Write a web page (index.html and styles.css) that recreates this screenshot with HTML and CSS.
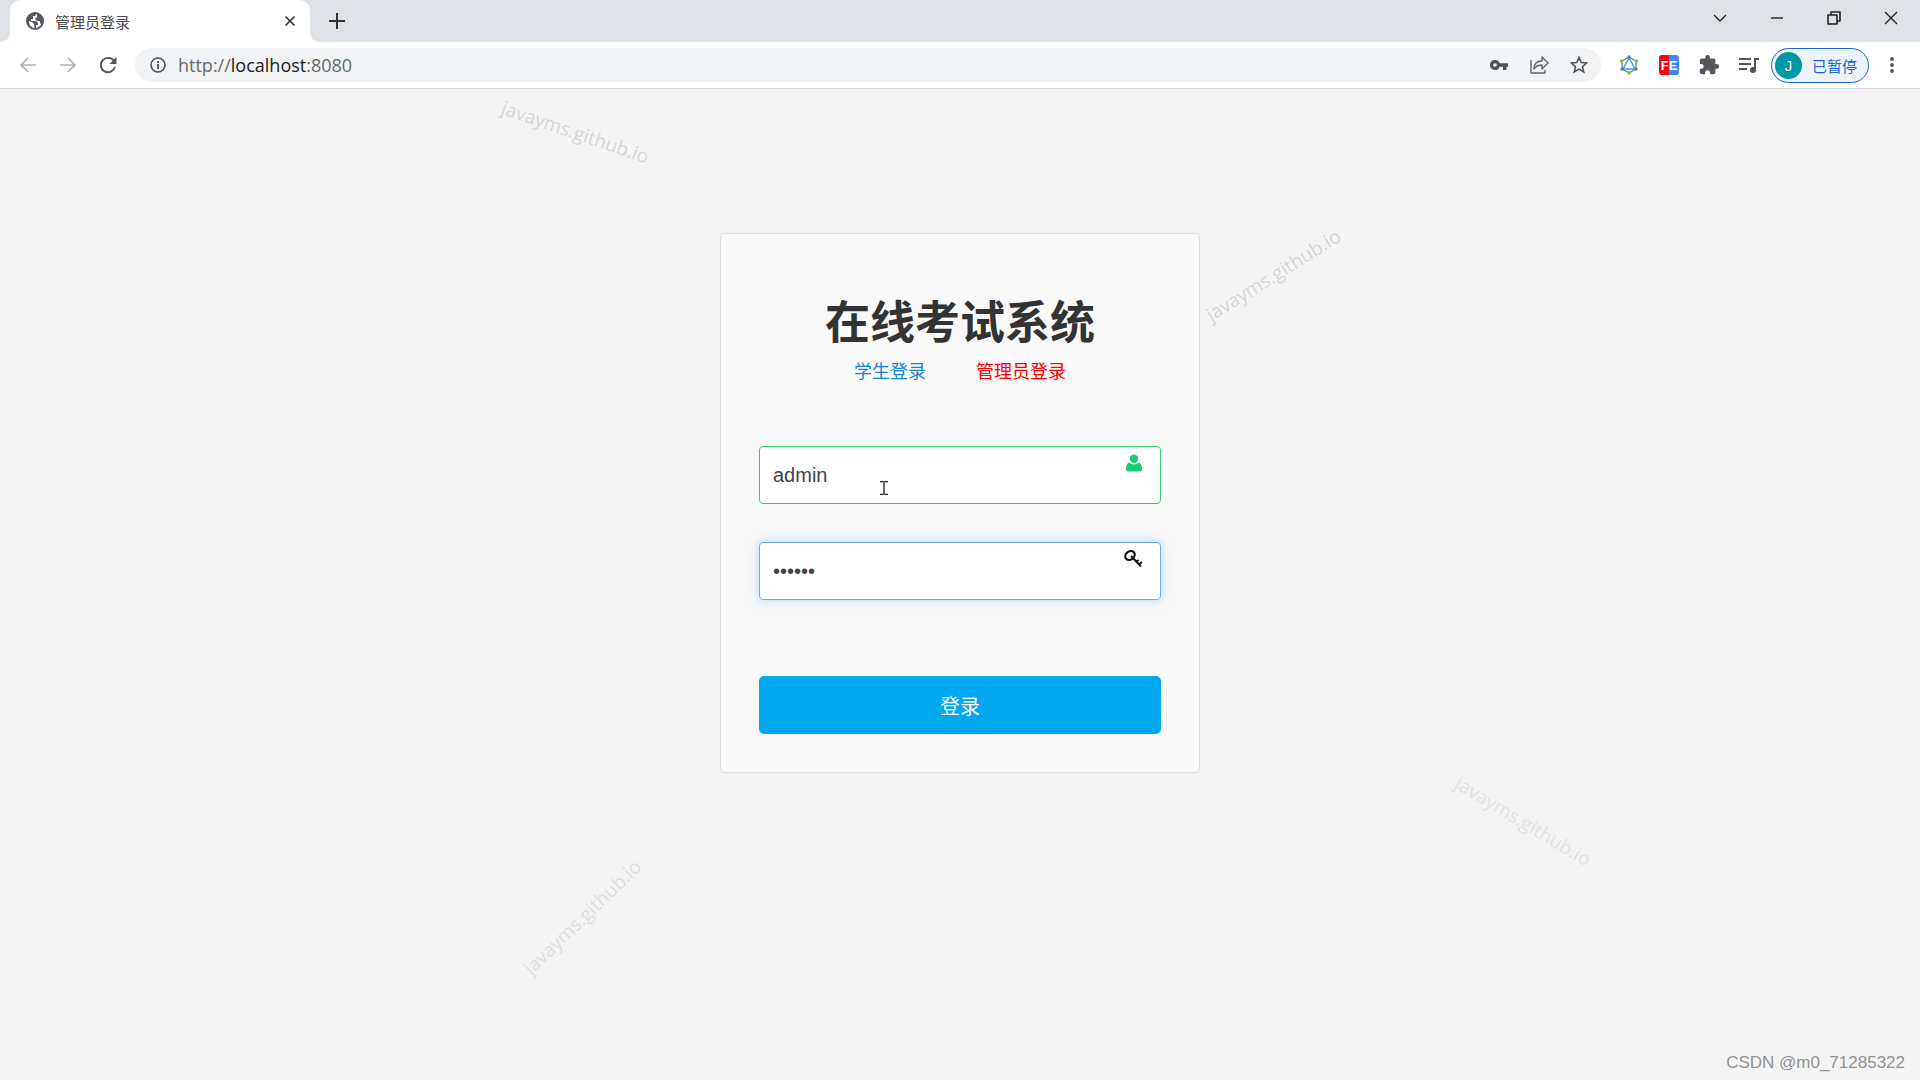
FILE: index.html
```html
<!DOCTYPE html>
<html lang="zh-CN">
<head>
	<meta charset="utf-8">
	<title>管理员登录</title>
	<link rel="stylesheet" href="styles.css">
</head>
<body>
	<header class="browser">
		<div class="tabbar">
			<div class="tab">
				<svg class="favicon" viewBox="0 0 18 18" width="18" height="18"><circle cx="9" cy="9" r="8" fill="#fff" stroke="#55585c" stroke-width="2"/><path d="M1 10V8C1 4 4 1 9 1h2L9 4H7v3H5v2h5l2 2v2h-2v4C5 17 1 14 1 10z" fill="#55585c"/><path d="M3 9l3 1 2 2v2l1 2c-4 0-6-3-6-7z" fill="#fff"/><path d="M10 1c4 1 7 4 7 8l-1 4-2-2V9h-3L9 7l2-2V3z" fill="#55585c"/></svg>
				<span class="tab-title">管理员登录</span>
				<button class="icon-btn tab-close" aria-label="关闭标签页"><svg viewBox="0 0 12 12" width="12" height="12"><path d="M1.500 1.500l9 9m0-9l-9 9" stroke="#303336" stroke-width="1.600"/></svg></button>
			</div>
			<button class="icon-btn new-tab" aria-label="新标签页"><svg viewBox="0 0 16 16" width="16" height="16"><path d="M8 0v16M0 8h16" stroke="#303336" stroke-width="2"/></svg></button>
			<div class="window-controls">
				<button class="icon-btn" aria-label="搜索标签页"><svg viewBox="0 0 14 14" width="14" height="14"><path d="M1 4l6 6 6-6" fill="none" stroke="#222" stroke-width="1.4"/></svg></button>
				<button class="icon-btn" aria-label="最小化"><svg viewBox="0 0 14 14" width="14" height="14"><path d="M1 7h12" stroke="#222" stroke-width="1.4"/></svg></button>
				<button class="icon-btn" aria-label="还原"><svg viewBox="0 0 14 14" width="14" height="14"><path d="M1 4h9v9H1zM4 4V1h9v9h-3" fill="none" stroke="#222" stroke-width="1.6" stroke-linejoin="round"/></svg></button>
				<button class="icon-btn" aria-label="关闭"><svg viewBox="0 0 14 14" width="14" height="14"><path d="M1 1l12 12M13 1L1 13" stroke="#222" stroke-width="1.4"/></svg></button>
			</div>
		</div>

		<div class="toolbar">
			<div class="nav">
				<button class="icon-btn" aria-label="后退"><svg viewBox="0 0 18 18" width="18" height="18"><path d="M17 9H2M9 2L2 9l7 7" fill="none" stroke="#adb0b3" stroke-width="1.7"/></svg></button>
				<button class="icon-btn" aria-label="前进"><svg viewBox="0 0 18 18" width="18" height="18"><path d="M1 9h15M9 2l7 7-7 7" fill="none" stroke="#adb0b3" stroke-width="1.7"/></svg></button>
				<button class="icon-btn" aria-label="重新加载"><svg viewBox="0 0 18 18" width="18" height="18"><path d="M15 5A7.200 7.200 0 1 0 16 11" fill="none" stroke="#505357" stroke-width="1.900"/><path d="M17.500 1v7h-7z" fill="#505357"/></svg></button>
			</div>
			<div class="omnibox">
				<button class="icon-btn site-info" aria-label="网站信息"><svg viewBox="0 0 16 16" width="16" height="16"><circle cx="8" cy="8" r="7" fill="none" stroke="#505357" stroke-width="1.6"/><path d="M8 7v5M8 4v2" stroke="#505357" stroke-width="1.8"/></svg></button>
				<div class="url" role="textbox" aria-label="地址栏" contenteditable="true" spellcheck="false">http://<span class="host">localhost</span>:8080</div>
				<button class="icon-btn" aria-label="密码"><svg viewBox="0 0 18 18" width="18" height="18"><path fill-rule="evenodd" d="M5 4a5 5 0 0 1 4.7 3.3H18v3.4h-1.5V14H13v-3.3H9.7A5 5 0 1 1 5 4zm0 3.2a1.8 1.8 0 1 0 0 3.6 1.8 1.8 0 0 0 0-3.600z" fill="#505357"/></svg></button>
				<button class="icon-btn" aria-label="分享"><svg viewBox="0 0 20 20" width="20" height="20"><path d="M2 5v13h14v-3M5 14c0-5 3-8 8-8V2l6 6-6 6v-4c-4 0-6 1-8 4z" fill="none" stroke="#63666a" stroke-width="1.4" stroke-linejoin="round"/></svg></button>
				<button class="icon-btn" aria-label="收藏"><svg viewBox="0 0 18 18" width="18" height="18"><path d="M9 1.500l2.200 5 5.400.5-4.100 3.600 1.200 5.300L9 13.100l-4.700 2.800 1.200-5.300L1.400 7l5.400-.5z" fill="none" stroke="#505357" stroke-width="1.6"/></svg></button>
			</div>
			<div class="extensions">
				<button class="icon-btn" aria-label="扩展程序"><svg viewBox="0 0 20 20" width="20" height="20"><path d="M10 2l7 4v8l-7 4-7-4V6z" fill="none" stroke="#687078" stroke-width="1.2"/><path d="M10 3l6 11H4z" fill="#fff" stroke="#3d9be0" stroke-width="1.5"/><g fill="#79c832"><circle cx="2.5" cy="6" r="1.7"/><circle cx="17.5" cy="6" r="1.7"/><circle cx="10" cy="18" r="1.8"/></g><g fill="#2c88d0"><circle cx="10" cy="2" r="1.7"/><circle cx="3" cy="14" r="1.7"/><circle cx="17" cy="14" r="1.7"/></g></svg></button>
				<button class="icon-btn" aria-label="FE 助手"><span class="fe"><b>F</b><b>E</b></span></button>
				<button class="icon-btn" aria-label="管理扩展"><svg viewBox="0 0 24 24" width="22" height="22"><path d="M20.5 11H19V7c0-1.100-.9-2-2-2h-4V3.500a2.500 2.500 0 0 0-5 0V5H4c-1.100 0-2 .9-2 2v3.800h1.500a2.700 2.700 0 0 1 0 5.400H2V20c0 1.100.9 2 2 2h3.800v-1.500a2.700 2.700 0 0 1 5.400 0V22H17c1.100 0 2-.9 2-2v-4h1.500a2.500 2.500 0 0 0 0-5z" fill="#55585c"/></svg></button>
				<button class="icon-btn" aria-label="媒体控制"><svg viewBox="0 0 20 18" width="20" height="18"><path d="M0 3h12M0 8h12M0 13h8M16 14V3h4" fill="none" stroke="#505357" stroke-width="2"/><circle cx="14" cy="14" r="3" fill="#505357"/></svg></button>
				<button class="profile"><span class="avatar">J</span><span>已暂停</span></button>
				<button class="icon-btn menu" aria-label="菜单"><svg viewBox="0 0 4 18" width="4" height="18"><g fill="#505357"><circle cx="2" cy="3" r="1.9"/><circle cx="2" cy="9" r="1.9"/><circle cx="2" cy="15" r="1.9"/></g></svg></button>
			</div>
		</div>
	</header>

	<main class="page">
		<form class="login">
			<h1>在线考试系统</h1>
			<nav class="roles">
				<a href="#student">学生登录</a>
				<a href="#admin" class="active">管理员登录</a>
			</nav>
			<div class="field">
				<input class="valid" type="text" value="admin" aria-label="用户名">
				<svg class="field-icon" viewBox="0 0 18 18" width="18" height="18"><circle cx="9" cy="4.800" r="4.200" fill="#1fcb70"/><path d="M4.500 8.500a6.300 6.300 0 0 0 9 0C16 9 17 12 17 15q0 2.500-2.500 2.500h-11Q1 17.500 1 15c0-3 1-6 3.500-6.500z" fill="#1fcb70"/></svg>
				<svg class="pointer" viewBox="0 0 8 14" width="8" height="14"><path d="M0 .7h3l1 .6 1-.6h3M4 1v12M0 13.300h3l1-.6 1 .6h3" fill="none" stroke="#222" stroke-width="1.3"/></svg>
			</div>
			<div class="field">
				<input class="current" type="password" value="123456" aria-label="密码">
				<svg class="field-icon" viewBox="0 0 20 18" width="20" height="18"><ellipse cx="7" cy="5.500" rx="5" ry="4" transform="rotate(-35 7 5.500)" fill="none" stroke="#111" stroke-width="2.2"/><path d="M8 6l10 10.500M13 12l2.500-2M16 14.500l3-2.500" fill="none" stroke="#111" stroke-width="2"/></svg>
			</div>
			<button class="submit" type="submit">登录</button>
		</form>

		<div class="watermarks">
			<span class="mark mark-1">javayms.github.io</span>
			<span class="mark mark-2">javayms.github.io</span>
			<span class="mark mark-3">javayms.github.io</span>
			<span class="mark mark-4">javayms.github.io</span>
			<span class="credit">CSDN @m0_71285322</span>
		</div>
	</main>
</body>
</html>
```
FILE: styles.css
```css
* {
	box-sizing: border-box;
}
body {
	margin: 0;
	min-height: 100vh;
	display: flex;
	flex-direction: column;
	background: #f4f4f4;
	color: #333;
	font-family: "Liberation Sans", "Noto Sans CJK SC", sans-serif;
}
button {
	font-family: inherit;
	cursor: pointer;
}
svg {
	display: block;
	flex: none;
}

/* browser chrome */
.tabbar {
	display: flex;
	height: 42px;
	padding: 0 1px 0 10px;
	background: #dee1e6;
}
.tab {
	position: relative;
	display: flex;
	align-items: center;
	gap: 11px;
	width: 300px;
	padding: 0 8px 0 16px;
	background: #fff;
	border-radius: 10px 10px 0 0;
}
.tab::before,
.tab::after {
	content: "";
	position: absolute;
	bottom: 0;
	width: 10px;
	height: 10px;
}
.tab::before {
	right: 100%;
	background: radial-gradient(circle at 0 0, #dee1e6 10px, #fff 10px);
}
.tab::after {
	left: 100%;
	background: radial-gradient(circle at 100% 0, #dee1e6 10px, #fff 10px);
}
.tab-title {
	flex: 1;
	font-size: 15px;
	color: #45484c;
}
.icon-btn {
	display: flex;
	align-items: center;
	justify-content: center;
	width: 24px;
	height: 24px;
	padding: 0;
	border: 0;
	background: none;
}
.new-tab {
	align-self: center;
	margin-left: 15px;
}
.window-controls {
	display: flex;
	margin-left: auto;
}
.window-controls .icon-btn {
	width: 57px;
	height: 36px;
}
.toolbar {
	display: flex;
	align-items: center;
	height: 47px;
	padding: 0 16px;
	background: #fff;
	border-bottom: 1px solid #d5d6d8;
}
.nav {
	display: flex;
	gap: 16px;
	margin-right: 15px;
}
.omnibox {
	flex: 1;
	display: flex;
	align-items: center;
	gap: 16px;
	height: 34px;
	padding: 0 10px 0 11px;
	background: #f1f3f4;
	border-radius: 17px;
}
.site-info {
	margin-right: -8px;
}
.url {
	flex: 1;
	font-family: "Open Sans", "Noto Sans", sans-serif;
	font-size: 18px;
	color: #66696d;
}
.host {
	color: #202124;
}
.extensions {
	display: flex;
	align-items: center;
	gap: 16px;
	margin-left: 16px;
}
.fe {
	display: flex;
	align-items: center;
	justify-content: center;
	width: 20px;
	height: 20px;
	border-radius: 3px;
	background: linear-gradient(90deg, #ee0a10 50%, #3e86f5 50%);
	color: #fff;
	font-size: 13px;
}
.profile {
	display: flex;
	align-items: center;
	gap: 10px;
	height: 35px;
	margin-left: -6px;
	padding: 0 11px 0 3px;
	border: 1px solid #1a62d6;
	border-radius: 18px;
	background: #edf2fb;
	color: #1a62d6;
	font-size: 15px;
}
.avatar {
	width: 27px;
	height: 27px;
	border-radius: 50%;
	background: #0097a7;
	color: #fff;
	line-height: 27px;
}
.menu {
	margin-left: -5px;
}

/* login page */
.page {
	position: relative;
	flex: 1;
	padding-top: 144px;
	overflow: hidden;
}
.login {
	width: 480px;
	max-width: 100%;
	margin: 0 auto;
	padding: 62px 38px 38px;
	background: #f9f9f9;
	border: 1px solid #dedede;
	border-radius: 5px;
}
h1 {
	margin: 0 0 7px;
	font-size: 45px;
	line-height: 56px;
	text-align: center;
}
.roles {
	display: flex;
	justify-content: center;
	gap: 50px;
	margin-bottom: 61px;
	font-size: 18px;
	line-height: 26px;
}
.roles a {
	color: #1685cf;
	text-decoration: none;
}
.roles .active {
	color: #f00;
}
.field {
	position: relative;
	margin-bottom: 38px;
}
.field input {
	display: block;
	width: 100%;
	height: 58px;
	padding: 0 50px 0 13px;
	border: 1px solid #ccc;
	border-radius: 4px;
	background: #fff;
	color: #444;
	font-family: inherit;
	font-size: 20px;
	outline: none;
}
.field .valid {
	border-color: #2ecc71;
}
.field .current {
	border-color: #66afe9;
	box-shadow: 0 0 10px rgba(102, 175, 233, 0.5);
}
.field-icon {
	position: absolute;
	top: 8px;
	right: 18px;
}
.pointer {
	position: absolute;
	top: 35px;
	left: 121px;
}
.submit {
	display: block;
	width: 100%;
	height: 58px;
	margin-top: 76px;
	border: 0;
	border-radius: 5px;
	background: #00a8f0;
	color: #fff;
	font-size: 20px;
}

/* watermarks over the page */
.watermarks {
	position: absolute;
	inset: 0;
	pointer-events: none;
}
.mark {
	position: absolute;
	color: #d5d5d5;
	font-family: "Open Sans", "Noto Sans", sans-serif;
	font-size: 19px;
	line-height: 26px;
}
.mark-1 {
	top: 30px;
	left: 498px;
	transform: rotate(19deg);
}
.mark-2 {
	top: 173px;
	left: 1196px;
	transform: rotate(-32deg);
}
.mark-3 {
	top: 815px;
	left: 505px;
	color: #dedede;
	transform: rotate(-44deg);
}
.mark-4 {
	top: 719px;
	left: 1446px;
	color: #e2e2e2;
	transform: rotate(31deg);
}
.credit {
	position: absolute;
	right: 15px;
	bottom: 7px;
	color: #929292;
	font-size: 17px;
}
```
